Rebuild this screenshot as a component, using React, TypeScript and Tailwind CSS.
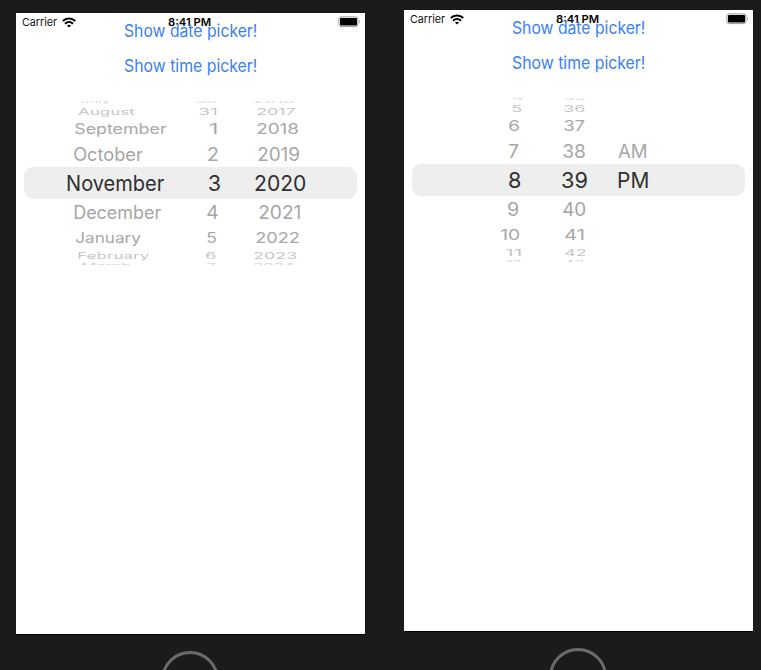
import { useLayoutEffect, useState } from "react";

type FitProps = { text: string; width: number; size: number; scaleY?: number; weight?: number; color: string };

/* Text whose ink starts at its left edge and spans exactly `width` pixels. */
function FitText({ text, width, size, scaleY = 1, weight = 400, color }: FitProps) {
  const [fit, setFit] = useState({ shift: 0, scale: 1 });
  useLayoutEffect(() => {
    const ctx = document.createElement("canvas").getContext("2d");
    if (!ctx) return;
    ctx.font = `${weight} ${size}px Inter, "Liberation Sans", sans-serif`;
    const m = ctx.measureText(text);
    const scale = width / (m.actualBoundingBoxRight + m.actualBoundingBoxLeft);
    setFit({ scale, shift: m.actualBoundingBoxLeft * scale });
  }, [text, width, size, weight]);
  return (
    <span
      className="block shrink-0 origin-left whitespace-pre leading-none"
      style={{
        width,
        color,
        fontSize: size,
        fontWeight: weight,
        transform: `translateX(${fit.shift}px) scale(${fit.scale}, ${scaleY})`,
      }}
    >
      {text}
    </span>
  );
}

type Cell = [text: string, left: number, right: number];
type Row = Cell[];

/* Height, vertical squash, tint and text offset of each row around the drum. */
const DRUM = [
  { height: 4, squash: 0.25, color: "#d8d8d8", dy: -1.8 },
  { height: 12, squash: 0.4, color: "#c6c6c6", dy: 0.3 },
  { height: 24, squash: 0.65, color: "#a8a8a8", dy: 0.2 },
  { height: 26, squash: 0.82, color: "#a6a6a6", dy: 0.3 },
  { height: 32, squash: 0.97, color: "#303030", dy: 0.6 },
  { height: 27, squash: 0.82, color: "#a6a6a6", dy: -0.3 },
  { height: 24, squash: 0.65, color: "#a8a8a8", dy: 0.2 },
  { height: 12, squash: 0.4, color: "#c6c6c6", dy: 0 },
  { height: 3, squash: 0.25, color: "#d0d0d0", dy: 1.5 },
];

const DATE_ROWS: Row[] = [
  [["July", 66, 94], ["30", 179.5, 199.5], ["2016", 238, 278]],
  [["August", 62, 118.7], ["31", 182.7, 199.7], ["2017", 240.7, 279]],
  [["September", 59.3, 150.7], ["1", 194, 200.3], ["2018", 241.5, 283]],
  [["October", 57.5, 126], ["2", 191.5, 201.3], ["2019", 242.5, 284]],
  [["November", 50.8, 147.8], ["3", 193, 204.5], ["2020", 239, 289.5]],
  [["December", 57.8, 144.8], ["4", 191, 201.5], ["2021", 243.3, 284]],
  [["January", 60, 124.6], ["5", 191.5, 201], ["2022", 240.5, 283.3]],
  [["February", 62.3, 133.3], ["6", 190.5, 200.3], ["2023", 238.5, 281.3]],
  [["March", 66, 114], ["7", 191, 199.7], ["2024", 238.5, 278]],
];

const TIME_ROWS: Row[] = [
  [["4", 108.5, 118], ["35", 161, 181]],
  [["5", 107.5, 117.3], ["36", 159.7, 180.7]],
  [["6", 105, 115.3], ["37", 160.3, 181]],
  [["7", 105.3, 114.7], ["38", 159, 181.3], ["AM", 214.3, 242.3]],
  [["8", 105.3, 117.1], ["39", 157.8, 183.1], ["PM", 214, 243.5]],
  [["9", 104, 114.7], ["40", 159, 181.5]],
  [["10", 97, 115.3], ["41", 161, 179.3]],
  [["11", 102, 116.5], ["42", 160.7, 181]],
  [["12", 103, 116.5], ["43", 161, 180]],
];

function Wheel({ rows }: { rows: Row[] }) {
  return (
    <div className="mt-4 flex flex-col">
      {rows.map((row, i) => {
        const drum = DRUM[i];
        const selected = i === 4;
        return (
          <div
            key={i}
            className={selected ? "mx-2 flex rounded-[9px] bg-[#eeeeee]" : "mx-2 flex overflow-hidden"}
            style={{ height: drum.height }}
          >
            <div className="flex items-center" style={{ transform: `translateY(${drum.dy}px)` }}>
              {row.map(([text, left, right], j) => (
                <div key={text} style={{ marginLeft: left - (j ? row[j - 1][2] : 8) }}>
                  <FitText
                    text={text}
                    width={right - left}
                    size={22}
                    weight={375}
                    scaleY={drum.squash}
                    color={drum.color}
                  />
                </div>
              ))}
            </div>
          </div>
        );
      })}
    </div>
  );
}

function Wifi() {
  return (
    <svg width="14" height="11" viewBox="0 0 14 11" className="ml-[5px]" fill="none" stroke="#000">
      <path d="M.8 4.100C4.200.7 9.800.7 13.200 4.100" strokeWidth="2.100" />
      <path d="M3 6.700c2.300-2.200 5.700-2.200 8 0" strokeWidth="2" />
      <path d="M7 10.500 4.900 8.500c1.200-1 3-1 4.200 0z" fill="#000" stroke="none" />
    </svg>
  );
}

function Battery() {
  return (
    <svg width="23" height="12" viewBox="0 0 23 12" className="ml-auto mr-[4px]">
      <rect x=".9" y=".9" width="19" height="9.700" rx="2.200" fill="#fff" stroke="#999" />
      <rect x="2" y="2" width="17" height="7.500" rx="1" fill="#000" />
      <path d="M21.200 4v3.500c1-.4 1-3.100 0-3.500z" fill="#888" />
    </svg>
  );
}

function Phone({ rows }: { rows: Row[] }) {
  return (
    <div className="flex w-[349px] shrink-0 flex-col">
      <div className="flex h-[621px] w-full shrink-0 flex-col bg-white shadow-[0_1px_0_#000]">
        <div className="flex h-[18px] items-center pl-[6px]">
          <FitText text="Carrier" width={35} size={11} color="#111" />
          <Wifi />
          <div className="ml-[92px]">
            <FitText text="8:41 PM" width={43} size={11} weight={600} color="#000" />
          </div>
          <Battery />
        </div>
        <button className="relative -mt-[10px] flex h-5 items-center self-start pl-[107.5px]">
          <FitText text="Show date picker!" width={132.5} size={17} color="#3880f6" />
        </button>
        <button className="mt-[15px] flex h-5 items-center self-start pl-[107.500px]">
          <FitText text="Show time picker!" width={132.5} size={17} color="#3880f6" />
        </button>
        <div className="h-[9px]" />
        <Wheel rows={rows} />
      </div>
      <div className="ml-[145px] mt-[17px] h-[58px] w-[58px] shrink-0 rounded-full border-[3px] border-[#6b6b6b]" />
    </div>
  );
}

export default function App() {
  return (
    <div className="flex h-[670px] w-[761px] gap-[39px] overflow-hidden bg-[#1b1b1b] pl-4 font-['Inter','Liberation_Sans',sans-serif]">
      <div className="pt-[13px]">
        <Phone rows={DATE_ROWS} />
      </div>
      <div className="pt-[10px]">
        <Phone rows={TIME_ROWS} />
      </div>
    </div>
  );
}
